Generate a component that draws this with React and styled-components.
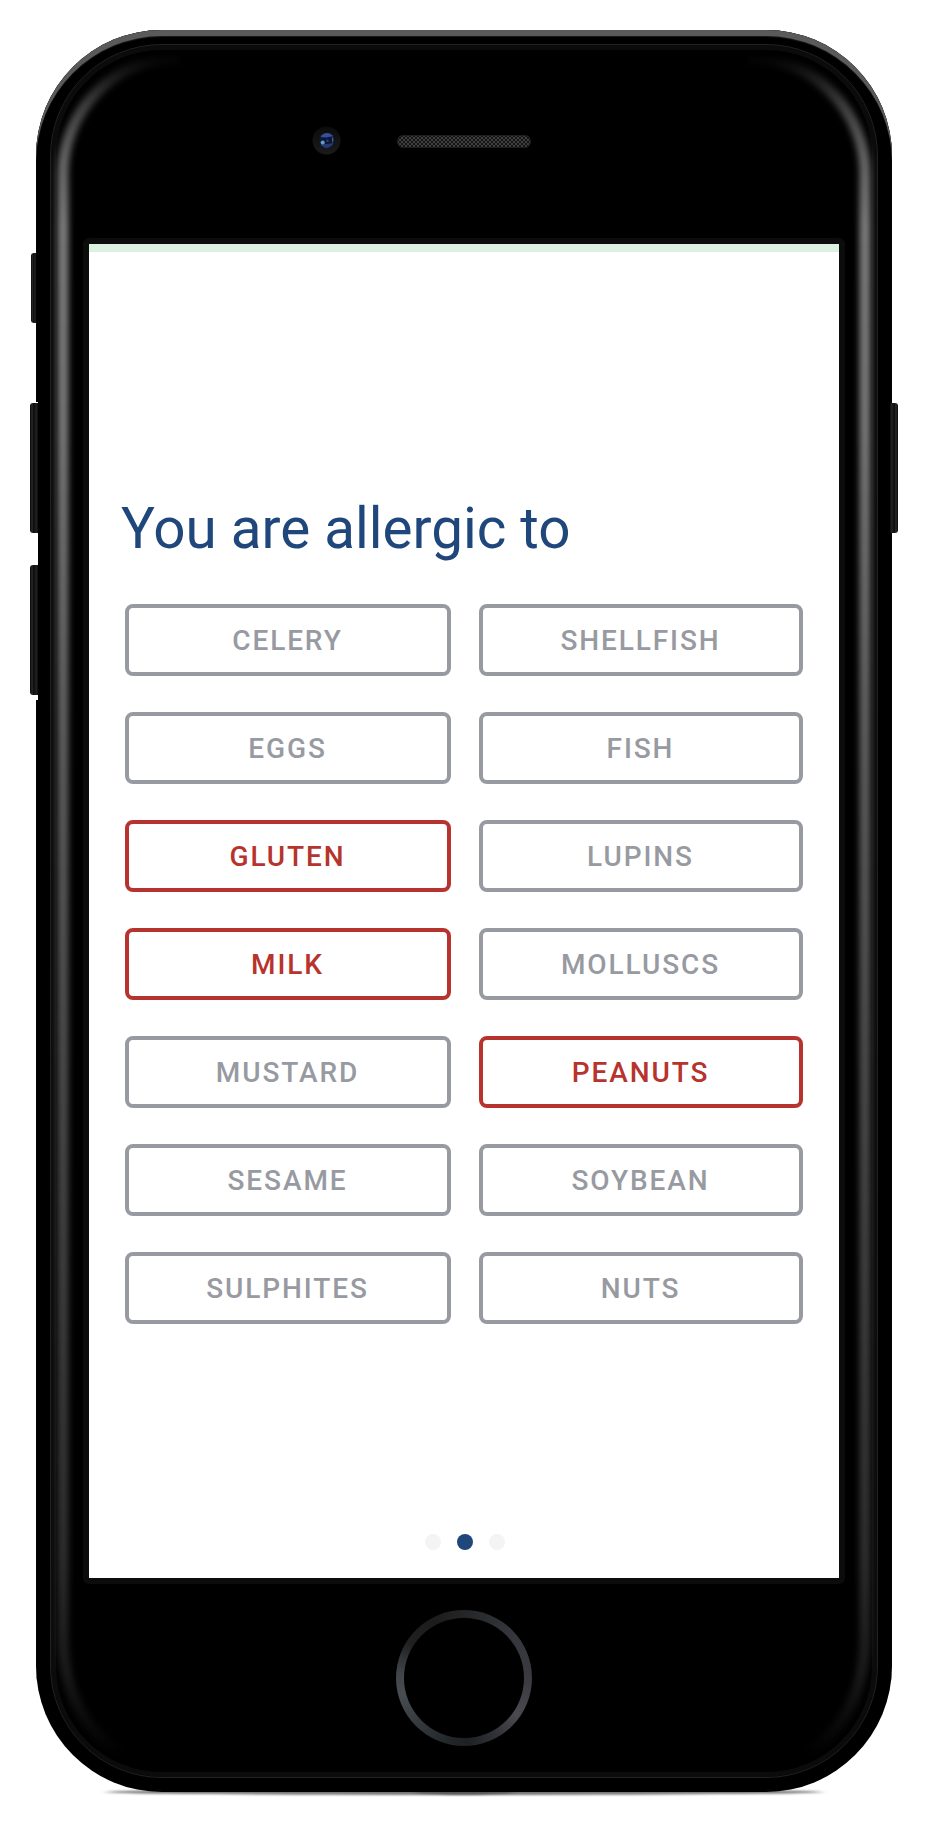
import React from "react";
import styled, { createGlobalStyle } from "styled-components";

const Global = createGlobalStyle`
  body { margin: 0; background: #fff; font-family: Roboto, "Liberation Sans", sans-serif; }
  * { box-sizing: border-box; }
`;

const Page = styled.main`
  width: 928px;
  height: 1824px;
  padding: 30px 36px 32px;
  overflow: hidden;
`;

const Phone = styled.div`
  position: relative;
  isolation: isolate;
  width: 856px;
  height: 1762px;
  padding: 14px;
`;

const Shell = styled.div`
  position: absolute;
  inset: 0;
  z-index: -1;
  border-radius: 126px;
  background: #000;
  box-shadow: inset 0 6px 0 #5a5a5a, inset 0 7px 1px #1a1a1a;
`;

const Face = styled.div`
  height: 1734px;
  border: 1px solid #222;
  border-radius: 112px;
  background: #000;
  box-shadow: inset 0 0 0 5px #0b0b0b;
  display: flex;
  flex-direction: column;
  align-items: center;
`;

const Top = styled.div`
  width: 100%;
  height: 193px;
  display: flex;
  align-items: center;
  padding: 0 0 2px 261px;
  gap: 56px;
`;

const Speaker = styled.div`
  width: 134px;
  height: 13px;
  margin-top: 2px;
  border-radius: 6.5px;
  background: repeating-conic-gradient(#404040 0 25%, #151515 0 50%) 0 0 / 4px 4px;
  box-shadow: inset 0 0 1px 1px #1c1c1c;
`;

const Screen = styled.section`
  flex: none;
  width: 762px;
  height: 1346px;
  border: 6px solid #0c0c0c;
  border-radius: 6px;
  background: #fff;
  background-clip: padding-box;
  display: flex;
  flex-direction: column;
`;

const StatusBar = styled.div`
  height: 8px;
  background: #dcf1df;
`;

const Title = styled.h1`
  margin: 244px 0 0 32px;
  font-size: 56.6px;
  line-height: 66px;
  font-weight: 400;
  color: #20477b;
`;

const Grid = styled.div`
  display: grid;
  grid-template-columns: 326px 324px;
  column-gap: 28px;
  row-gap: 36px;
  margin: 42px 0 0 36px;
`;

const Option = styled.button`
  height: 72px;
  padding: 2px 1px 0 0;
  border: 4px solid ${(p) => (p.$on ? "#b7332d" : "#989aa2")};
  border-radius: 8px;
  background: #fff;
  color: ${(p) => (p.$on ? "#b7332d" : "#989aa2")};
  font: 500 28px/62px Roboto, "Liberation Sans", sans-serif;
  letter-spacing: 1.9px;
  text-align: center;
`;

const Dots = styled.div`
  display: flex;
  gap: 16px;
  margin: auto 0 28px 336px;
`;

const Dot = styled.i`
  width: 16px;
  height: 16px;
  border-radius: 50%;
  background: ${(p) => (p.$on ? "#20477b" : "#f4f4f4")};
`;

const Home = styled.div`
  width: 136px;
  height: 136px;
  margin-top: 26px;
  padding: 8px;
  border-radius: 50%;
  background: conic-gradient(#242527, #34353a 12%, #3a3b40 25%, #4a4a51 35%, #303136 42%, #1f2022 49%, #22272a 54%, #33383c 62%, #484d51 71%, #42464a 76%, #202020 84%, #1c1c1c 92%, #242527);
  &::before {
    content: "";
    display: block;
    height: 100%;
    border-radius: 50%;
    background: #000;
  }
`;

const SideKey = styled.i`
  position: absolute;
  z-index: ${(p) => (p.$under ? -2 : 0)};
  ${(p) => p.$side}: ${(p) => p.$out}px;
  top: ${(p) => p.$top}px;
  width: ${(p) => p.$w}px;
  height: ${(p) => p.$h}px;
  border-radius: ${(p) => (p.$side === "left" ? "3px 0 0 3px" : "1px 3px 3px 1px")};
  background: linear-gradient(to ${(p) => (p.$side === "left" ? "right" : "left")}, #111 0 12%, #2c2c2c 25%, #0d0d0d 45%, #1b1b1b 70%, #222 85%, #050505);
`;

const Notch = styled.i`
  position: absolute;
  left: 0;
  top: 372px;
  width: 2px;
  height: 298px;
  background: #fff;
`;

const Gloss = styled.svg`
  position: absolute;
  inset: 0;
  pointer-events: none;
`;

const Shadow = styled.svg`
  position: absolute;
  left: 40px;
  bottom: -14px;
  z-index: -2;
`;

const ALLERGENS = [
  ["Celery"], ["Shellfish"], ["Eggs"], ["Fish"], ["Gluten", true], ["Lupins"],
  ["Milk", true], ["Molluscs"], ["Mustard"], ["Peanuts", true], ["Sesame"],
  ["Soybean"], ["Sulphites"], ["Nuts"],
];

const Camera = () => (
  <svg width="29" height="29" viewBox="0 0 29 29">
    <defs>
      <linearGradient id="rim" x1="0" y1="0" x2="0" y2="1">
        <stop offset="0" stopColor="#0b0b0b" /><stop offset="1" stopColor="#1b1b1b" />
      </linearGradient>
      <clipPath id="lens"><circle cx="15" cy="14.5" r="7.5" /></clipPath>
      <filter id="soft"><feGaussianBlur stdDeviation=".7" /></filter>
    </defs>
    <circle cx="14.5" cy="14.5" r="14" fill="url(#rim)" />
    <circle cx="15" cy="14.5" r="7.5" fill="#0e1730" />
    <g clipPath="url(#lens)" filter="url(#soft)">
      <path d="M7 11Q14 2 22 10L14 11.5Z" fill="#34509a" />
      <path d="M7 18L15 18L22 17Q16 25 9 21Z" fill="#243a72" />
      <path d="M20 10Q23 14 20 17Z" fill="#355fa0" />
      <circle cx="15.5" cy="14.7" r="1.2" fill="#24438a" />
      <circle cx="10.7" cy="16.5" r="2.1" fill="#6397cd" />
    </g>
  </svg>
);

const edge = "M144 27 A117 117 0 0 0 27 144 V1606 C27 1660 46 1700 88 1726";

export default function App() {
  return (
    <>
      <Global />
      <Page>
        <Phone>
          <Shadow width="776" height="24" viewBox="0 0 776 24">
            <defs>
              <filter id="drop" x="-5%" y="-100%" width="110%" height="300%"><feGaussianBlur stdDeviation="3 1.3" /></filter>
            </defs>
            <ellipse cx="388" cy="10" rx="359" ry="3" fill="#777" filter="url(#drop)" />
            <ellipse cx="388" cy="9.5" rx="50" ry="3" fill="#555" filter="url(#drop)" />
          </Shadow>
          <Shell />
          <SideKey $side="left" $out={-5} $top={223} $w={5} $h={70} $under />
          <Notch />
          <SideKey $side="left" $out={-6} $top={373} $w={8} $h={130} />
          <SideKey $side="left" $out={-6} $top={535} $w={8} $h={130} />
          <SideKey $side="right" $out={-6} $top={373} $w={8} $h={130} />
          <Face>
            <Top>
              <Camera />
              <Speaker />
            </Top>
            <Screen>
              <StatusBar />
              <Title>You are allergic to</Title>
              <Grid>
                {ALLERGENS.map(([name, on]) => (
                  <Option key={name} $on={on}>{name.toUpperCase()}</Option>
                ))}
              </Grid>
              <Dots>
                <Dot /><Dot $on /><Dot />
              </Dots>
            </Screen>
            <Home />
          </Face>
          <Gloss width="856" height="1762" viewBox="0 0 856 1762">
            <defs>
              <linearGradient id="shine" gradientUnits="userSpaceOnUse" x1="0" y1="25" x2="0" y2="1726">
                <stop offset="0" stopColor="#fff" stopOpacity="0" />
                <stop offset=".03" stopColor="#fff" stopOpacity=".25" />
                <stop offset=".06" stopColor="#fff" stopOpacity=".39" />
                <stop offset=".1" stopColor="#fff" stopOpacity=".49" />
                <stop offset=".22" stopColor="#fff" stopOpacity=".47" />
                <stop offset=".4" stopColor="#fff" stopOpacity=".37" />
                <stop offset=".88" stopColor="#fff" stopOpacity=".18" />
                <stop offset=".95" stopColor="#fff" stopOpacity=".1" />
                <stop offset="1" stopColor="#fff" stopOpacity="0" />
              </linearGradient>
              <filter id="glow" filterUnits="userSpaceOnUse" x="0" y="0" width="856" height="1762"><feGaussianBlur stdDeviation="3.2" /></filter>
            </defs>
            <g fill="none" stroke="url(#shine)" strokeWidth="11" filter="url(#glow)">
              <path d={edge} />
              <path d={edge} transform="translate(856 0) scale(-1 1)" />
            </g>
          </Gloss>
        </Phone>
      </Page>
    </>
  );
}
